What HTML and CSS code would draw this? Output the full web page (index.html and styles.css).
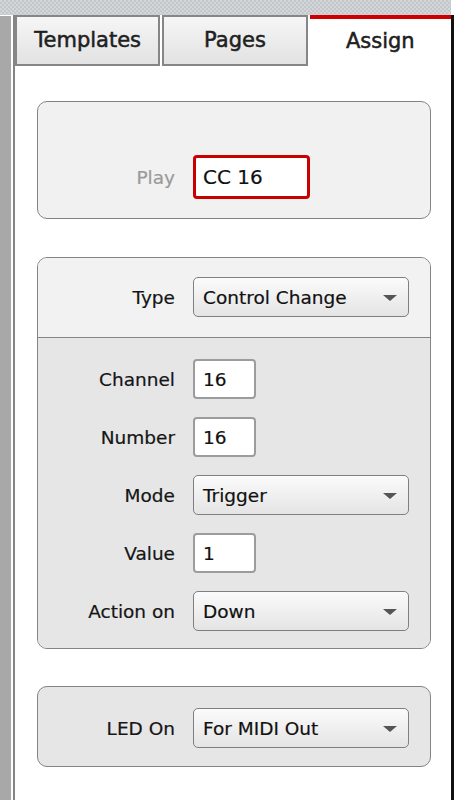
FILE: index.html
```html
<!DOCTYPE html>
<html>
<head>
<meta charset="utf-8">
<link rel="stylesheet" href="styles.css">
</head>
<body>
<div class="checker"></div>
<div class="row">
  <div class="leftbar"></div>
  <div class="panel">
    <div class="tabs">
      <div class="tab">Templates</div>
      <div class="tab">Pages</div>
      <div class="tab active">Assign</div>
    </div>
    <div class="content">
      <div class="box box-play">
        <div class="field">
          <span class="label muted">Play</span>
          <div class="input play">CC 16</div>
        </div>
      </div>

      <div class="box">
        <div class="section top">
          <div class="field">
            <span class="label">Type</span>
            <div class="select"><span>Control Change</span><i class="arrow"></i></div>
          </div>
        </div>
        <div class="section lower">
          <div class="field">
            <span class="label">Channel</span>
            <div class="input small">16</div>
          </div>
          <div class="field">
            <span class="label">Number</span>
            <div class="input small">16</div>
          </div>
          <div class="field">
            <span class="label">Mode</span>
            <div class="select"><span>Trigger</span><i class="arrow"></i></div>
          </div>
          <div class="field">
            <span class="label">Value</span>
            <div class="input small">1</div>
          </div>
          <div class="field">
            <span class="label">Action on</span>
            <div class="select"><span>Down</span><i class="arrow"></i></div>
          </div>
        </div>
      </div>

      <div class="box box-led">
        <div class="field">
          <span class="label">LED On</span>
          <div class="select"><span>For MIDI Out</span><i class="arrow"></i></div>
        </div>
      </div>
    </div>
  </div>
  <div class="rightedge"></div>
</div>
</body>
</html>
```

FILE: styles.css
```css
html, body {
  margin: 0;
  padding: 0;
  background: #ffffff;
}
body {
  width: 454px;
  height: 800px;
  overflow: hidden;
  font-family: "DejaVu Sans", "Liberation Sans", sans-serif;
  color: #1a1a1a;
  display: flex;
  flex-direction: column;
}
.checker {
  height: 15px;
  flex: none;
  background-color: #c9cdd1;
  background-image: repeating-conic-gradient(#c3c7cb 0 25%, #d3d6d9 0 50%);
  background-size: 4px 4px;
  margin-right: 3px;
}
.row {
  flex: 1;
  display: flex;
}
.leftbar {
  width: 11px;
  flex: none;
  background: #a8a8a8;
  margin-top: 1px;
  margin-right: 2px;
}
.panel {
  flex: 1;
  border-left: 2px solid #858585;
  display: flex;
  flex-direction: column;
}
.rightedge {
  width: 3px;
  flex: none;
  background: #111;
}
.tabs {
  display: flex;
  gap: 2px;
  height: 51px;
  flex: none;
}
.tab {
  flex: 1;
  border: 2px solid #868686;
  background: linear-gradient(#f6f6f6, #e2e2e2);
  font-size: 21px;
  font-weight: normal;
  -webkit-text-stroke: 0.5px #202020;
  color: #202020;
  display: flex;
  align-items: center;
  justify-content: center;
  padding-bottom: 2px;
}
.tab.active {
  border: none;
  border-top: 4px solid #cc0000;
  background: #ffffff;
  padding-bottom: 4px;
}
.content {
  padding: 35px 20px 0 22px;
  display: flex;
  flex-direction: column;
  gap: 38px;
}
.box {
  border: 1px solid #848484;
  border-radius: 10px;
  background: #f1f1f1;
  overflow: hidden;
}
.box-play {
  padding: 53px 0 19px;
}
.box-led {
  background: #e6e6e6;
  padding: 21px 0 18px;
  margin-top: -1px;
}
.section.top {
  background: #f2f2f2;
  padding: 19px 0 20px;
  border-bottom: 1px solid #858585;
}
.section.lower {
  background: #e6e6e6;
  padding: 21px 0 17px;
  display: flex;
  flex-direction: column;
  gap: 18px;
}
.field {
  display: flex;
  align-items: center;
  gap: 18px;
}
.label {
  width: 137px;
  flex: none;
  text-align: right;
  font-size: 18.5px;
  color: #151515;
  -webkit-text-stroke: 0.2px #151515;
}
.label.muted {
  color: #9a9a9a;
  -webkit-text-stroke: 0.2px #9a9a9a;
}
.input {
  height: 36px;
  box-sizing: content-box;
  border: 2px solid #9c9c9c;
  border-radius: 4px;
  background: #ffffff;
  font-size: 18.5px;
  display: flex;
  align-items: center;
  padding: 0 8px;
  color: #111;
  -webkit-text-stroke: 0.2px #111;
}
.input.small {
  width: 43px;
}
.input.play {
  width: 97px;
  height: 38px;
  border: 3px solid #c80000;
  border-radius: 4px;
  font-size: 20px;
  padding: 0 7px;
}
.select {
  border: 1px solid #7f7f7f;
  border-radius: 5px;
  background: linear-gradient(#fbfbfb, #e4e4e4);
  font-size: 18.5px;
  display: flex;
  align-items: center;
  justify-content: space-between;
  padding: 0 11px 0 9px;
  box-sizing: border-box;
  width: 216px;
  height: 40px;
  color: #111;
  -webkit-text-stroke: 0.2px #111;
}
.arrow {
  width: 0;
  height: 0;
  border-left: 7px solid transparent;
  border-right: 7px solid transparent;
  border-top: 6px solid #555;
  margin-top: 2px;
}
```
